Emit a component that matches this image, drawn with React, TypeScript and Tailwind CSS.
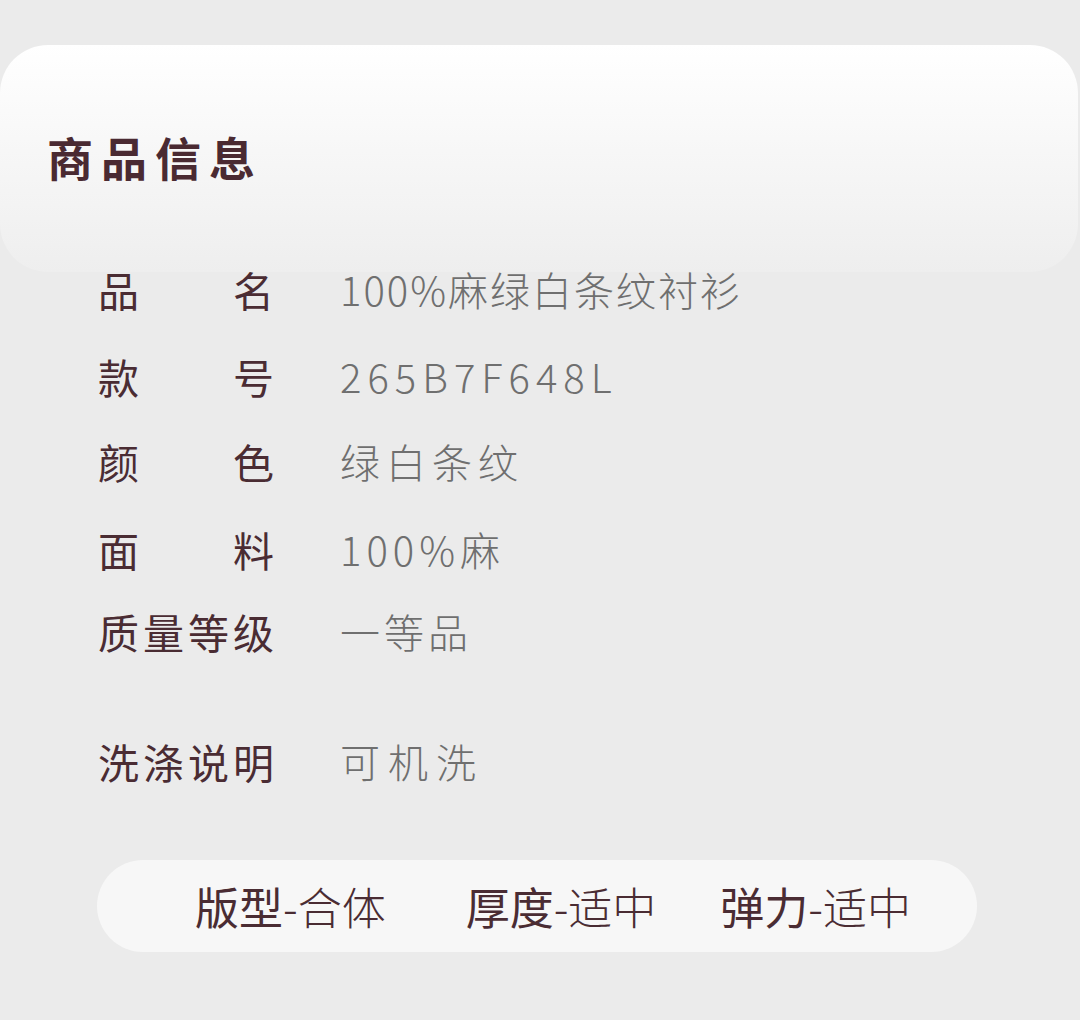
import React from "react";

const font = { fontFamily: '"Noto Sans CJK SC", "Noto Sans", sans-serif' };

function Label({ text }: { text: string }) {
  return (
    <div className="flex w-[176px] justify-between text-[41px] leading-[42px] text-[#4a2c33]">
      {text.split("").map((c, i) => (
        <span key={i}>{c}</span>
      ))}
    </div>
  );
}

function Row({
  label,
  value,
  tracking,
  mt,
}: {
  label: string;
  value: string;
  tracking: string;
  mt: string;
}) {
  return (
    <div className={`flex items-center pl-[98px] ${mt}`}>
      <Label text={label} />
      <div
        className={`ml-[66px] text-[40px] leading-[42px] font-light text-[#6f6f6f] ${tracking}`}
      >
        {value}
      </div>
    </div>
  );
}

export default function App() {
  return (
    <div style={font} className="min-h-[1020px] w-[1080px] bg-[#ebebeb] pt-[45px] pb-[68px]">
      <div className="mr-[2px] flex h-[227px] items-center rounded-[48px] bg-gradient-to-b from-white to-[#eeeeee] pb-[6px] pl-[47px]">
        <h1 className="text-[46px] font-bold leading-none tracking-[8px] text-[#4a2a32]">
          商品信息
        </h1>
      </div>
      <div className="-mt-[4px] flex flex-col">
        <Row label="品名" value="100%麻绿白条纹衬衫" tracking="tracking-[2px]" mt="mt-0" />
        <Row label="款号" value="265B7F648L" tracking="tracking-[6px]" mt="mt-[45px]" />
        <Row label="颜色" value="绿白条纹" tracking="tracking-[6px]" mt="mt-[43px]" />
        <Row label="面料" value="100%麻" tracking="tracking-[5px]" mt="mt-[46px]" />
        <Row label="质量等级" value="一等品" tracking="tracking-[4px]" mt="mt-[40px]" />
        <Row label="洗涤说明" value="可机洗" tracking="tracking-[8px]" mt="mt-[88px]" />
      </div>
      <div className="ml-[97px] mt-[78px] flex h-[92px] w-[880px] items-center rounded-full bg-[#f7f7f7] pl-[98px] text-[44px] leading-none text-[#4a2c33]">
        <span>
          <span className="font-normal">版型</span>
          <span className="font-light">-合体</span>
        </span>
        <span className="ml-[80px]">
          <span className="font-normal">厚度</span>
          <span className="font-light">-适中</span>
        </span>
        <span className="ml-[64px]">
          <span className="font-normal">弹力</span>
          <span className="font-light">-适中</span>
        </span>
      </div>
    </div>
  );
}
